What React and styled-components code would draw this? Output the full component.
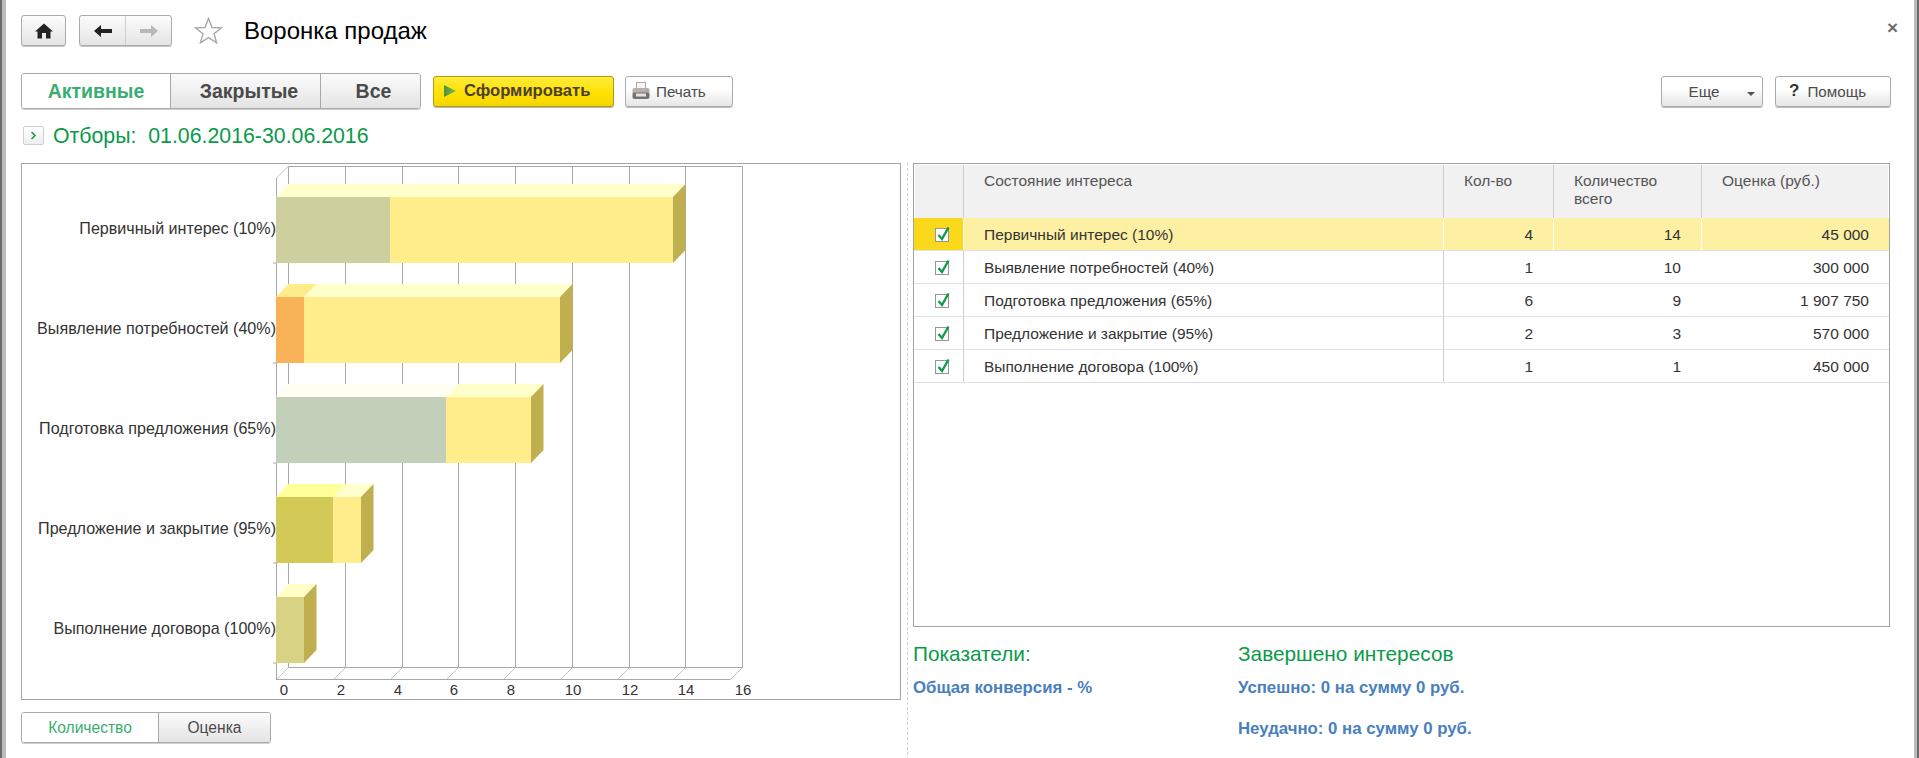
import React from "react";
import styled, { createGlobalStyle } from "styled-components";

const Global = createGlobalStyle`
  html, body { margin: 0; padding: 0; background: #fff; overflow: hidden; }
  body { font-family: "Liberation Sans", Arial, sans-serif; color: #333; }
  * { box-sizing: border-box; }
`;

const Frame = styled.div`
  width: 1919px; height: 758px; display: flex; background: #fff;
  border-left: 2px solid #6b6b6b; border-right: 2px solid #6b6b6b;
`;
const Inner = styled.div`
  flex: 1; min-width: 0; display: flex; flex-direction: column;
  border-left: 4px solid #bcbcbc; border-right: 3px solid #bcbcbc;
  padding: 15px 24px 0 15px;
`;

const TitleRow = styled.div`display: flex; align-items: center; height: 31px;`;
const IconButton = styled.div`
  width: ${p => p.$w}px; height: 31px; display: flex; align-items: center; justify-content: center;
  margin-right: ${p => p.$mr}px; border: 1px solid #ababab; border-radius: 3px;
  background: linear-gradient(#fcfcfc, #e4e4e4);
  box-shadow: 0 1px 0 #c4c4c4;
`;
const NavGroup = styled.div`
  width: 93px; height: 31px; display: flex; margin-right: 22px;
  border: 1px solid #ababab; border-radius: 3px;
  background: linear-gradient(#fcfcfc, #e4e4e4);
  box-shadow: 0 1px 0 #c4c4c4;
`;
const NavPart = styled.div`
  flex: 1; display: flex; align-items: center; justify-content: center;
  & + & { border-left: 1px solid #cfcfcf; }
`;
const Title = styled.h1`
  margin: 0 0 0 21px; font-size: 24px; font-weight: 400; color: #000; line-height: 30px; white-space: nowrap;
`;
const Close = styled.div`
  margin-left: auto; margin-right: -8px; margin-top: -6px; font-size: 19px; line-height: 20px; color: #6e6e6e; font-weight: 700;
`;

const Toolbar = styled.div`display: flex; align-items: center; height: 36px; margin: 27px -1px 0 0;`;
const Tabs = styled.div`
  display: grid; grid-template-columns: ${p => p.$cols}; height: ${p => p.$h}px; width: ${p => p.$w}px;
  border: 1px solid #a8a8a8; border-radius: 3px; overflow: hidden; box-shadow: 0 1px 0 #d0d0d0;
`;
const Tab = styled.div`
  display: flex; align-items: center; justify-content: center;
  padding-left: ${p => p.$pl || 0}px;
  font-size: ${p => p.$fs}px; font-weight: ${p => p.$bold ? 700 : 400};
  color: ${p => p.$active ? "#3aae72" : "#4a4a4a"};
  background: ${p => p.$active ? "#fff" : "linear-gradient(#fbfbfb, #e4e4e4)"};
  & + & { border-left: 1px solid #a8a8a8; }
`;
const Btn = styled.div`
  height: 31px; width: ${p => p.$w}px; margin-left: ${p => p.$ml};
  display: flex; align-items: center; justify-content: ${p => p.$justify || "center"}; gap: ${p => p.$gap || 0}px;
  padding: ${p => p.$pad || "0"};
  border: 1px solid #ababab; border-radius: 3px; font-size: 15.2px; color: #4c4c4c;
  background: linear-gradient(#fff 40%, #e6e6e6);
  box-shadow: 0 1px 0 #bdbdbd;
`;
const PrimaryBtn = styled(Btn)`
  border-color: #b09a10; color: #4a4030; font-weight: 700; font-size: 16.6px;
  background: linear-gradient(#ffec3a, #ffe000 60%, #f5d500);
  box-shadow: 0 1px 0 #b8b8b8;
`;
const Caret = styled.span`
  position: absolute; right: 7px; top: 15px; width: 0; height: 0;
  border-left: 4px solid transparent; border-right: 4px solid transparent; border-top: 4px solid #555;
`;
const MoreBtn = styled(Btn)`position: relative; padding-right: 16px;`;
const HelpMark = styled.span`font-weight: 700; font-size: 17px; color: #333;`;

const FilterRow = styled.div`display: flex; align-items: center; height: 19px; margin-top: 17px; gap: 9px; padding-left: 2px;`;
const Expander = styled.div`
  width: 21px; height: 19px; border: 1px solid #cfcfcf; border-radius: 2px; background: linear-gradient(#fff, #eee);
  display: flex; align-items: center; justify-content: center;
`;
const FilterText = styled.div`font-size: 21.3px; line-height: 19px; padding-top: 2px; color: #0a9a4a; white-space: pre;`;

const Main = styled.div`display: flex; margin-top: 18px; align-items: stretch;`;
const LeftCol = styled.div`width: 880px; display: flex; flex-direction: column; gap: 12px;`;
const ChartBox = styled.div`height: 537px; border: 1px solid #a3a3a3; border-right-width: 1px; background: #fff;`;
const Splitter = styled.div`width: 1px; margin: 0 5px 0 6px; border-left: 1px dashed #cfcfcf;`;
const RightCol = styled.div`flex: 1; min-width: 0; display: flex; flex-direction: column;`;
const ChartSvg = styled.svg`display: block; width: 878px; height: 535px;`;

const TableBox = styled.div`height: 464px; border: 1px solid #a3a3a3; background: #fff;`;
const HeadRow = styled.div`
  display: grid; grid-template-columns: 48px 480px 110px 148px 1fr; height: 54px;
  border: 1px solid #fff; border-bottom: 0; margin-bottom: 0;
  background: #f1f1f1;
`;
const HeadCell = styled.div`
  padding: 7px 10px 0 20px; font-size: 15.5px; line-height: 18px; color: #555;
  & + & { border-left: 1px solid #cfcfcf; }
`;
const Row = styled.div`
  display: grid; grid-template-columns: 49px 480px 110px 148px 1fr; height: 33px;
  border-bottom: 1px solid #e2e2e2; background: ${p => p.$selected ? "#fdf0a3" : "#fff"};
  &:first-of-type { border-top: 2px solid #dcdcdc; height: 34px; }
`;
const Cell = styled.div`
  display: flex; align-items: center; font-size: 15.5px; color: #333; white-space: nowrap;
  justify-content: ${p => p.$right ? "flex-end" : "flex-start"};
  padding: ${p => p.$right ? "2px 20px 0 0" : "2px 0 0 20px"};
  border-left: 1px solid ${p => p.$line};
`;
const CheckCell = styled.div`
  display: flex; align-items: center; padding: 1px 0 0 21px;
  background: ${p => p.$selected ? "#fad91d" : "transparent"};
`;
const Stats = styled.div`display: grid; grid-template-columns: 325px 1fr; padding-top: 16px;`;
const StatCol = styled.div`display: flex; flex-direction: column;`;
const StatTitle = styled.div`font-size: 20.8px; line-height: 22px; color: #0a9a4a; margin-bottom: 13px;`;
const StatLine = styled.div`font-size: 16.8px; line-height: 20px; height: 41px; font-weight: 700; color: #4a80bd; white-space: nowrap;`;

const Home = () => (
  <svg width="18" height="16" viewBox="0 0 18 16"><path d="M9 0.5 L18 8.5 H15.5 V15.5 H11 V10 H7 V15.5 H2.5 V8.5 H0 Z" fill="#222"/></svg>
);
const Arrow = ({ dir, color }) => (
  <svg width="18" height="12" viewBox="0 0 18 12" style={dir === "r" ? { transform: "scaleX(-1)" } : undefined}>
    <path d="M0 6 L7 0 V4 H18 V8 H7 V12 Z" fill={color}/>
  </svg>
);
const Star = () => (
  <svg width="29" height="27" viewBox="0 0 29 27">
    <path d="M14.5 1.5 L18 10.5 L27.5 10.8 L20 16.8 L22.6 25.8 L14.5 20.6 L6.4 25.8 L9 16.8 L1.5 10.8 L11 10.5 Z" fill="#fff" stroke="#a8a8a8" strokeWidth="1.4"/>
  </svg>
);
const Play = () => (
  <svg width="12" height="12" viewBox="0 0 12 12">
    <defs><linearGradient id="pl" x1="0" y1="0" x2="1" y2="0"><stop offset="0" stopColor="#4f8f3a"/><stop offset="1" stopColor="#7cc04c"/></linearGradient></defs>
    <path d="M0 0 L12 6 L0 12 Z" fill="url(#pl)"/>
  </svg>
);
const Printer = () => (
  <svg width="18" height="18" viewBox="0 0 18 18">
    <rect x="4.5" y="0.5" width="9" height="7" fill="#f6f6f6" stroke="#a9a9a9"/>
    <rect x="0.5" y="6" width="17" height="7" rx="2" fill="#b9aea9"/>
    <rect x="0.5" y="10.5" width="17" height="6.5" rx="2" fill="#77726f"/>
    <rect x="4" y="11.5" width="10" height="3" fill="#e4e4e4"/>
    <rect x="14" y="7.5" width="1.5" height="1.5" fill="#6fc06a"/>
  </svg>
);
const Chevron = () => (
  <svg width="7" height="9" viewBox="0 0 7 9"><path d="M1.5 1 L5 4.5 L1.5 8" fill="none" stroke="#1c9a55" strokeWidth="1.6"/></svg>
);
const Check = () => (
  <svg width="16" height="17" viewBox="0 0 16 17" style={{ display: "block" }}>
    <rect x="0.5" y="2.5" width="13" height="13" fill="#fff" stroke="#8f9a93"/>
    <path d="M3.5 9 L7 13 L13.5 1.5" fill="none" stroke="#139a4f" strokeWidth="2.4"/>
  </svg>
);

const D = 12.5;
const BARS = [
  { label: "Первичный интерес (10%)", y: 197, split: 390, end: 673, front: "#cdcf9e", top: "#ffffcc" },
  { label: "Выявление потребностей (40%)", y: 297, split: 304, end: 560, front: "#f9b257", top: "#ffec8a" },
  { label: "Подготовка предложения (65%)", y: 397, split: 446, end: 531, front: "#c2cfb9", top: "#fffef2" },
  { label: "Предложение и закрытие (95%)", y: 497, split: 333, end: 361, front: "#d2c957", top: "#ffff99" },
  { label: "Выполнение договора (100%)", y: 597, split: 304, end: 304, front: "#d8d284", top: "#ffffc5" },
];
const FRONT_X = [276, 333, 390, 446, 503, 560, 617, 673, 730];
const AXIS = ["0", "2", "4", "6", "8", "10", "12", "14", "16"];
const AXIS_X = [284, 341, 398, 454, 511, 573, 630, 686, 743];
const GRID = "#a8a8a8";

const Chart = () => (
  <ChartSvg viewBox="22 164 878 535">
    {FRONT_X.map((x, i) => (
      <g key={x} stroke={GRID} strokeWidth="1">
        <line x1={x + D} y1="166.5" x2={x + D} y2="667.5"/>
        <line x1={x + 0.5} y1="679.5" x2={x + D} y2="667.5" stroke="#c4c4c4"/>
      </g>
    ))}
    <line x1="288.5" y1="166.5" x2="742.5" y2="166.5" stroke={GRID}/>
    <line x1="288.5" y1="667.5" x2="742.5" y2="667.5" stroke={GRID}/>
    <line x1="276.5" y1="679.5" x2="730.5" y2="679.5" stroke={GRID}/>
    <line x1="276.5" y1="178" x2="276.5" y2="680" stroke={GRID}/>
    <line x1="276.5" y1="178" x2="288.5" y2="166" stroke="#c4c4c4"/>
    {BARS.map(b => {
      const h = 66, t = b.y - 13;
      return (
        <g key={b.label}>
          <line x1="273" y1={b.y + h} x2="277" y2={b.y + h} stroke={GRID}/>
          {b.end > b.split && <polygon points={`${b.split},${b.y} ${b.split + D},${t} ${b.end + D},${t} ${b.end},${b.y}`} fill="#ffffcc"/>}
          <polygon points={`276,${b.y} ${276 + D},${t} ${b.split + D},${t} ${b.split},${b.y}`} fill={b.top}/>
          <polygon points={`${b.end},${b.y} ${b.end + D},${t} ${b.end + D},${t + h} ${b.end},${b.y + h}`} fill="#c0af4f"/>
          {b.end > b.split && <rect x={b.split} y={b.y} width={b.end - b.split} height={h} fill="#ffed8b"/>}
          <rect x="276" y={b.y} width={b.split - 276} height={h} fill={b.front}/>
          <text x="276" y={b.y + 37} textAnchor="end" fontSize="16.1" fill="#333" fontFamily="'Liberation Sans', Arial, sans-serif">{b.label}</text>
        </g>
      );
    })}
    {AXIS.map((a, i) => (
      <text key={a} x={AXIS_X[i]} y="694.5" textAnchor="middle" fontSize="15" fill="#333" fontFamily="'Liberation Sans', Arial, sans-serif">{a}</text>
    ))}
  </ChartSvg>
);

const ROWS = [
  ["Первичный интерес (10%)", "4", "14", "45 000"],
  ["Выявление потребностей (40%)", "1", "10", "300 000"],
  ["Подготовка предложения (65%)", "6", "9", "1 907 750"],
  ["Предложение и закрытие (95%)", "2", "3", "570 000"],
  ["Выполнение договора (100%)", "1", "1", "450 000"],
];

export default function App() {
  return (
    <Frame>
      <Global />
      <Inner>
        <TitleRow>
          <IconButton $w={45} $mr={13}><Home /></IconButton>
          <NavGroup>
            <NavPart><Arrow dir="l" color="#222" /></NavPart>
            <NavPart><Arrow dir="r" color="#b8b8b8" /></NavPart>
          </NavGroup>
          <Star />
          <Title>Воронка продаж</Title>
          <Close>×</Close>
        </TitleRow>
        <Toolbar>
          <Tabs $cols="148px 150px 1fr" $h={36} $w={400}>
            <Tab $active $bold $fs={19.5}>Активные</Tab>
            <Tab $bold $fs={19.5} $pl={7}>Закрытые</Tab>
            <Tab $bold $fs={19.5} $pl={6}>Все</Tab>
          </Tabs>
          <PrimaryBtn $w={181} $ml="12px" $gap={8} $justify="flex-start" $pad="0 0 0 10px">
            <Play /><span>Сформировать</span>
          </PrimaryBtn>
          <Btn $w={108} $ml="11px" $gap={6} $justify="flex-start" $pad="0 0 0 6px"><Printer /><span>Печать</span></Btn>
          <MoreBtn $w={102} $ml="auto">Еще<Caret /></MoreBtn>
          <Btn $w={116} $ml="12px" $gap={8} $justify="flex-start" $pad="0 0 0 13px"><HelpMark>?</HelpMark><span>Помощь</span></Btn>
        </Toolbar>
        <FilterRow>
          <Expander><Chevron /></Expander>
          <FilterText>Отборы:  01.06.2016-30.06.2016</FilterText>
        </FilterRow>
        <Main>
          <LeftCol>
            <ChartBox><Chart /></ChartBox>
            <Tabs $cols="136px 1fr" $h={31} $w={250}>
              <Tab $active $fs={15.6}>Количество</Tab>
              <Tab $fs={15.6}>Оценка</Tab>
            </Tabs>
          </LeftCol>
          <Splitter />
          <RightCol>
            <TableBox>
              <HeadRow>
                <HeadCell />
                <HeadCell>Состояние интереса</HeadCell>
                <HeadCell>Кол-во</HeadCell>
                <HeadCell>Количество всего</HeadCell>
                <HeadCell>Оценка (руб.)</HeadCell>
              </HeadRow>
              {ROWS.map((r, i) => {
                const sel = i === 0;
                return (
                  <Row key={r[0]} $selected={sel}>
                    <CheckCell $selected={sel}><Check /></CheckCell>
                    <Cell $line={sel ? "#fff" : "#cfcfcf"}>{r[0]}</Cell>
                    <Cell $right $line={sel ? "#fff" : "#cfcfcf"}>{r[1]}</Cell>
                    <Cell $right $line={sel ? "#fff" : "transparent"}>{r[2]}</Cell>
                    <Cell $right $line={sel ? "#fff" : "transparent"}>{r[3]}</Cell>
                  </Row>
                );
              })}
            </TableBox>
            <Stats>
              <StatCol>
                <StatTitle>Показатели:</StatTitle>
                <StatLine>Общая конверсия - %</StatLine>
              </StatCol>
              <StatCol>
                <StatTitle>Завершено интересов</StatTitle>
                <StatLine>Успешно: 0 на сумму 0 руб.</StatLine>
                <StatLine>Неудачно: 0 на сумму 0 руб.</StatLine>
              </StatCol>
            </Stats>
          </RightCol>
        </Main>
      </Inner>
    </Frame>
  );
}
